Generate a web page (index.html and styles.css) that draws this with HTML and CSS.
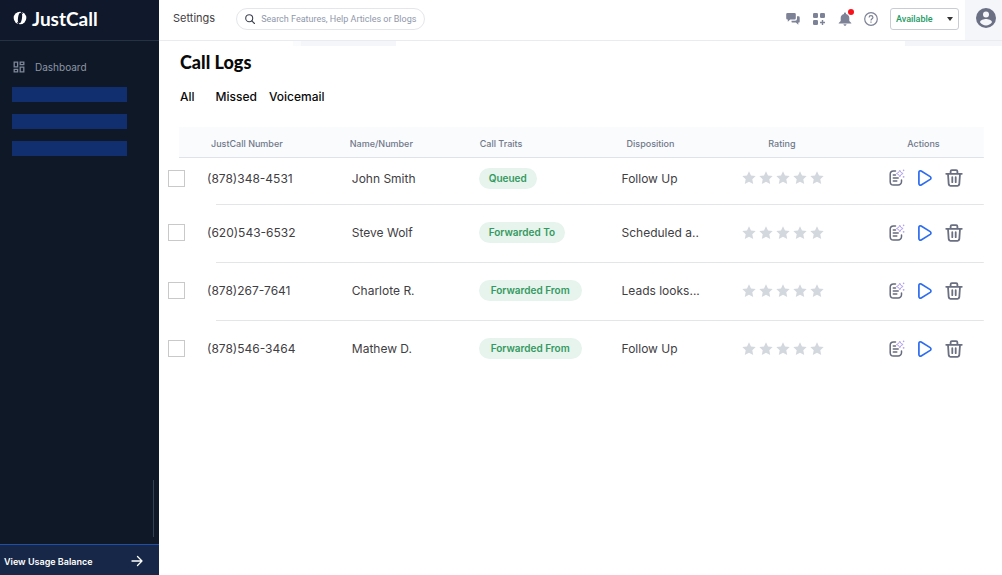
FILE: index.html
```html
<!DOCTYPE html>
<html lang="en">
<head>
    <meta charset="UTF-8">
    <meta name="viewport" content="width=device-width, initial-scale=1.0">
    <title>JustCall - Call Logs</title>
    <link rel="stylesheet" href="styles.css">
</head>
<body>
    <!-- Shared icons -->
    <svg class="sprite" aria-hidden="true">
        <symbol id="star" viewBox="0 0 14 14">
            <path d="M7 .3l2 4.200 4.700.6-3.400 3.200.9 4.700L7 10.800 2.800 13l.9-4.700L.3 5.100 5 4.500z"/>
        </symbol>
        <symbol id="stars" viewBox="0 0 82 14">
            <use href="#star" x="0" width="14" height="14"/>
            <use href="#star" x="17" width="14" height="14"/>
            <use href="#star" x="34" width="14" height="14"/>
            <use href="#star" x="51" width="14" height="14"/>
            <use href="#star" x="68" width="14" height="14"/>
        </symbol>
        <symbol id="note" viewBox="0 0 16 18">
            <g fill="none" stroke="#666b7e" stroke-width="1.500" stroke-linecap="round">
                <path d="M6.500 2h-2A3.300 3.300 0 0 0 1.200 5.300v7.400A3.300 3.300 0 0 0 4.500 16h4.700a3.300 3.300 0 0 0 3.300-3.300V11"/>
                <path d="M4.300 6h2.200M4.300 9h4.900M4.300 12h3.500"/>
            </g>
            <path d="M10.800 1.200l1.100 2.200 2.200 1.100-2.200 1.100-1.100 2.200-1.100-2.200-2.200-1.100 2.200-1.100z" fill="#fff" stroke="#b3a3ee" stroke-width="1"/>
            <circle cx="14.600" cy="1.400" r=".8" fill="#b3a3ee"/>
            <circle cx="14.600" cy="7.800" r=".9" fill="#b3a3ee"/>
        </symbol>
        <symbol id="play" viewBox="0 0 16 18">
            <path d="M1.900 3.400v11.200c0 1.300 1.200 1.900 2.300 1.300l9-5.500c1-.7 1-2.100 0-2.800l-9-5.500c-1.100-.6-2.300 0-2.300 1.300z" fill="none" stroke="#2e6cf0" stroke-width="1.700"/>
        </symbol>
        <symbol id="trash" viewBox="0 0 18 18">
            <path d="M1.200 4.800h15.600M3 4.800l.7 10.400c.1 1 .8 1.600 1.700 1.600h7.200c.9 0 1.600-.6 1.700-1.600L15 4.800M5.600 4.600V2.500c0-.8.500-1.300 1.300-1.300h4.200c.8 0 1.300.5 1.300 1.300v2.100M7.300 8.200v5M10.700 8.200v5" fill="none" stroke="#6a6f81" stroke-width="1.800" stroke-linecap="round" stroke-linejoin="round"/>
        </symbol>
    </svg>

    <div class="app">
        <!-- Sidebar -->
        <aside class="sidebar">
            <a class="logo" href="#">
                <svg width="14" height="14" viewBox="0 0 14 14">
                    <ellipse cx="7" cy="7" rx="6.300" ry="6.300" fill="#fff"/>
                    <ellipse cx="7" cy="7" rx="2" ry="5.300" transform="rotate(8 7 7)" fill="#10192b"/>
                    <path d="M8.200 0l1.100 3M5.800 14l-1.100-3" stroke="#10192b" stroke-width="1.200"/>
                </svg>
                <span>JustCall</span>
            </a>
            <nav class="menu">
                <a class="menu-item" href="#">
                    <svg width="12" height="12" viewBox="0 0 12 12" fill="none" stroke="#7d8798" stroke-width="1.300">
                        <path d="M1.200 1.200h3.400v4.600H1.200zM7.200 1.200h3.600v2.400H7.200zM7.200 6.200h3.600v4.600H7.200zM1.200 8.400h3.400v2.400H1.200z"/>
                    </svg>
                    <span>Dashboard</span>
                </a>
                <div class="menu-block"></div>
                <div class="menu-block"></div>
                <div class="menu-block"></div>
            </nav>
            <div class="scroll-thumb"></div>
            <a class="balance" href="#">
                <span>View Usage Balance</span>
                <svg width="12" height="12" viewBox="0 0 12 12" fill="none" stroke="#fff" stroke-width="1.300" stroke-linecap="round" stroke-linejoin="round">
                    <path d="M1 6h10M6.500 1.500L11 6l-4.500 4.500"/>
                </svg>
            </a>
        </aside>

        <div class="content">
            <!-- Top bar -->
            <header class="topbar">
                <a class="settings" href="#">Settings</a>
                <label class="search">
                    <svg width="10" height="10" viewBox="0 0 10 10" fill="none" stroke="#3c4250" stroke-width="1.100" stroke-linecap="round">
                        <circle cx="4.200" cy="4.200" r="3.500"/>
                        <path d="M6.800 6.800l2.700 2.700"/>
                    </svg>
                    <input type="text" placeholder="Search Features, Help Articles or Blogs" aria-label="Search">
                </label>
                <div class="tools">
                    <button class="tool" aria-label="Messages">
                        <svg width="14" height="14" viewBox="0 0 14 14" fill="#7d8296">
                            <path d="M1.500 1h7A1.300 1.300 0 0 1 9.800 2.300v4A1.300 1.300 0 0 1 8.500 7.600H4.300L1.800 9.800V7.600h-.3A1.300 1.300 0 0 1 .2 6.300v-4A1.300 1.300 0 0 1 1.500 1z"/>
                            <path d="M11 4.200h1.500a1.200 1.200 0 0 1 1.200 1.200v4a1.200 1.200 0 0 1-1.200 1.200h-.2v2.200l-2.400-2.200H6.700A1.200 1.200 0 0 1 5.500 9.400v-.6h3.700A1.800 1.800 0 0 0 11 7z"/>
                        </svg>
                    </button>
                    <button class="tool" aria-label="Apps">
                        <svg width="14" height="14" viewBox="0 0 14 14" fill="#7d8296">
                            <rect x="1" y="1" width="5" height="5" rx="1.300"/>
                            <rect x="8" y="1" width="5" height="5" rx="1.300"/>
                            <rect x="1" y="8" width="5" height="5" rx="1.300"/>
                            <path d="M9.800 8h1.400v1.800H13v1.400h-1.800V13H9.800v-1.800H8V9.800h1.800z"/>
                        </svg>
                    </button>
                    <button class="tool" aria-label="Notifications">
                        <svg width="14" height="14" viewBox="0 0 14 14" fill="#7d8296">
                            <path d="M7 .5c.6 0 1 .4 1 1v.4c2.100.5 3.300 2 3.300 4v3.200l2 1.900v.6H.7V11l2-1.900V5.900c0-2 1.200-3.500 3.300-4v-.4c0-.6.400-1 1-1zM5.500 12.200h3c0 .9-.6 1.500-1.500 1.500s-1.500-.6-1.500-1.500z"/>
                        </svg>
                        <span class="dot"></span>
                    </button>
                    <button class="tool" aria-label="Help">
                        <svg width="14" height="14" viewBox="0 0 14 14" fill="none" stroke="#7d8296" stroke-width="1.200">
                            <circle cx="7" cy="7" r="6.300"/>
                            <path d="M5.100 5.500C5.100 4.400 5.900 3.700 7 3.700s1.900.7 1.900 1.700C8.900 6.700 7 6.800 7 8.400M7 9.500v1.300"/>
                        </svg>
                    </button>
                    <select class="status" aria-label="Status">
                        <option>Available</option>
                    </select>
                </div>
                <button class="profile" aria-label="Profile">
                    <svg width="20" height="20" viewBox="0 0 20 20">
                        <circle cx="10" cy="10" r="10" fill="#6b7085"/>
                        <circle cx="10" cy="6.500" r="3" fill="#f4f6fa"/>
                        <path d="M4 14.200c0-2.100 4-3.200 6-3.200s6 1.100 6 3.200a7.200 7.200 0 0 1-12 0z" fill="#f4f6fa"/>
                    </svg>
                </button>
            </header>
            <div class="strip">
                <span class="strip-tab"></span>
                <span class="strip-end"></span>
            </div>

            <!-- Call logs -->
            <main class="page">
                <h1>Call Logs</h1>
                <nav class="tabs">
                    <a class="tab-all" href="#">All</a>
                    <a href="#">Missed</a>
                    <a href="#">Voicemail</a>
                </nav>

                <table class="logs">
                    <thead>
                        <tr>
                            <th class="col-check"></th>
                            <th class="col-number">JustCall Number</th>
                            <th class="col-name">Name/Number</th>
                            <th class="col-traits">Call Traits</th>
                            <th class="col-disposition">Disposition</th>
                            <th class="col-rating">Rating</th>
                            <th class="col-actions">Actions</th>
                        </tr>
                    </thead>
                    <tbody>
                        <tr>
                            <td><input type="checkbox" aria-label="Select John Smith"></td>
                            <td>(878)348-4531</td>
                            <td class="name">John Smith</td>
                            <td><span class="badge">Queued</span></td>
                            <td>Follow Up</td>
                            <td><svg class="stars"><use href="#stars"/></svg></td>
                            <td>
                                <div class="actions">
                                    <button aria-label="Notes"><svg width="16" height="18"><use href="#note"/></svg></button>
                                    <button aria-label="Play"><svg width="16" height="18"><use href="#play"/></svg></button>
                                    <button aria-label="Delete"><svg width="18" height="18"><use href="#trash"/></svg></button>
                                </div>
                            </td>
                        </tr>
                        <tr>
                            <td><input type="checkbox" aria-label="Select Steve Wolf"></td>
                            <td>(620)543-6532</td>
                            <td class="name">Steve Wolf</td>
                            <td><span class="badge">Forwarded To</span></td>
                            <td>Scheduled a..</td>
                            <td><svg class="stars"><use href="#stars"/></svg></td>
                            <td>
                                <div class="actions">
                                    <button aria-label="Notes"><svg width="16" height="18"><use href="#note"/></svg></button>
                                    <button aria-label="Play"><svg width="16" height="18"><use href="#play"/></svg></button>
                                    <button aria-label="Delete"><svg width="18" height="18"><use href="#trash"/></svg></button>
                                </div>
                            </td>
                        </tr>
                        <tr>
                            <td><input type="checkbox" aria-label="Select Charlote R."></td>
                            <td>(878)267-7641</td>
                            <td class="name">Charlote R.</td>
                            <td><span class="badge badge-wide">Forwarded From</span></td>
                            <td>Leads looks...</td>
                            <td><svg class="stars"><use href="#stars"/></svg></td>
                            <td>
                                <div class="actions">
                                    <button aria-label="Notes"><svg width="16" height="18"><use href="#note"/></svg></button>
                                    <button aria-label="Play"><svg width="16" height="18"><use href="#play"/></svg></button>
                                    <button aria-label="Delete"><svg width="18" height="18"><use href="#trash"/></svg></button>
                                </div>
                            </td>
                        </tr>
                        <tr>
                            <td><input type="checkbox" aria-label="Select Mathew D."></td>
                            <td>(878)546-3464</td>
                            <td class="name">Mathew D.</td>
                            <td><span class="badge badge-wide">Forwarded From</span></td>
                            <td>Follow Up</td>
                            <td><svg class="stars"><use href="#stars"/></svg></td>
                            <td>
                                <div class="actions">
                                    <button aria-label="Notes"><svg width="16" height="18"><use href="#note"/></svg></button>
                                    <button aria-label="Play"><svg width="16" height="18"><use href="#play"/></svg></button>
                                    <button aria-label="Delete"><svg width="18" height="18"><use href="#trash"/></svg></button>
                                </div>
                            </td>
                        </tr>
                    </tbody>
                </table>
            </main>
        </div>
    </div>
</body>
</html>
```
FILE: styles.css
```css
* {
    box-sizing: border-box;
}

body {
    margin: 0;
    font-family: Inter, "Liberation Sans", sans-serif;
    font-size: 12px;
    color: #3f4044;
    background: #fff;
}

a {
    color: inherit;
    text-decoration: none;
}

button {
    padding: 0;
    border: 0;
    background: none;
    cursor: pointer;
}

svg {
    display: block;
}

.sprite {
    position: absolute;
    width: 0;
    height: 0;
}

.app {
    display: flex;
    min-height: 100vh;
}

/* Sidebar */
.sidebar {
    display: flex;
    flex-direction: column;
    flex: 0 0 159px;
    background: #0f1827;
}

.logo {
    display: flex;
    align-items: center;
    gap: 5px;
    height: 41px;
    padding: 0 13px 4px;
    border-bottom: 1px solid #263143;
    background: #10192b;
    font-family: Lato, sans-serif;
    font-size: 19px;
    font-weight: bold;
    color: #fff;
}

.menu {
    display: flex;
    flex-direction: column;
    gap: 12px;
    flex: 1;
    padding: 18px 32px 0 12px;
}

.menu-item {
    display: flex;
    align-items: center;
    gap: 10px;
    height: 16px;
    padding-left: 1px;
    font-size: 10px;
    color: #8d96a5;
}

.menu-block {
    height: 15px;
    background: #112f6e;
}

.scroll-thumb {
    align-self: flex-end;
    width: 1px;
    height: 57px;
    margin: 0 5px 7px 0;
    background: #354052;
}

.balance {
    display: flex;
    align-items: center;
    justify-content: space-between;
    height: 31px;
    padding: 2px 16px 0 4px;
    border-top: 1px solid #1f4fa8;
    background: #172747;
    font-size: 9px;
    font-weight: 600;
    color: #fff;
}

/* Top bar */
.content {
    flex: 1;
    min-width: 0;
}

.topbar {
    display: flex;
    align-items: center;
    height: 41px;
    padding-left: 14px;
    border-bottom: 1px solid #e9ebee;
}

.settings {
    margin-right: 21px;
    padding-bottom: 4px;
    font-size: 11px;
}

.search {
    display: flex;
    align-items: center;
    gap: 6px;
    width: 189px;
    height: 22px;
    margin-bottom: 2px;
    padding: 0 6px 0 8px;
    border: 1px solid #e4e6ea;
    border-radius: 11px;
}

.search svg {
    flex: none;
}

.search input {
    flex: 1;
    min-width: 0;
    padding: 0;
    border: 0;
    outline: 0;
    background: none;
    font-family: Roboto, sans-serif;
    font-size: 9px;
}

.search input::placeholder {
    color: #8f97aa;
}

.tools {
    display: flex;
    align-items: center;
    gap: 12px;
    margin: 0 6px 3px auto;
}

.tool {
    position: relative;
}

.dot {
    position: absolute;
    top: -3px;
    right: -2px;
    width: 6px;
    height: 6px;
    border-radius: 50%;
    background: #f8121c;
}

.status {
    width: 69px;
    height: 22px;
    padding: 0 5px;
    border: 1px solid #c9ccd3;
    border-radius: 3px;
    appearance: none;
    background: url("data:image/svg+xml,%3Csvg xmlns='http://www.w3.org/2000/svg' width='6' height='4'%3E%3Cpath d='M0 0h6L3 4z' fill='%23333'/%3E%3C/svg%3E") no-repeat right 5px center;
    font-family: Roboto, sans-serif;
    font-size: 9px;
    font-weight: 500;
    color: #1d9a64;
}

.profile {
    display: flex;
    align-items: center;
    justify-content: center;
    width: 37px;
    height: 40px;
    padding: 0 0 4px 5px;
    background: #f4f6fa;
}

.strip {
    display: flex;
    justify-content: space-between;
    height: 5px;
    padding-left: 134px;
}

.strip-tab {
    width: 103px;
    border-left: 8px solid #fafbfc;
    background: #f4f6f9;
}

.strip-end {
    width: 97px;
    background: #f4f5f8;
}

/* Call logs */
.page {
    padding: 4px 18px 0 9px;
}

h1 {
    margin: 0 0 13px 12px;
    font-family: Lato, sans-serif;
    font-size: 18px;
    font-weight: 900;
    line-height: 24px;
    color: #0a0a0a;
}

.tabs {
    display: flex;
    gap: 12px;
    margin: 0 0 20px 12px;
    font-size: 12px;
    font-weight: 500;
    line-height: 20px;
    color: #0a0a0a;
}

.tab-all {
    margin-right: 9px;
}

.logs {
    width: 100%;
    table-layout: fixed;
    border-collapse: collapse;
}

.logs thead tr {
    height: 31px;
    background: linear-gradient(#dfe2e6, #dfe2e6) no-repeat right bottom / calc(100% - 11px) 1px, linear-gradient(#f9fbfd, #f9fbfd) no-repeat right / calc(100% - 11px) 100%;
}

.logs th {
    padding: 2px 0 0;
    font-size: 9px;
    font-weight: 500;
    text-align: left;
    color: #70788a;
}

.logs .col-check {
    width: 39px;
}

.logs .col-number {
    width: 17.5%;
    padding-left: 4px;
}

.logs .col-name {
    width: 15.8%;
}

.logs .col-traits {
    width: 17.5%;
    padding-left: 1px;
}

.logs .col-disposition {
    width: 14.8%;
    padding-left: 5px;
}

.logs .col-rating {
    width: 18%;
    padding-left: 26px;
}

.logs .col-actions {
    padding-left: 18px;
}

.logs tbody tr {
    height: 58px;
    background: linear-gradient(#e4e5e7, #e4e5e7) no-repeat right bottom / calc(100% - 48px) 1px;
}

.logs tbody tr:first-child {
    height: 47px;
}

.logs tbody tr:last-child {
    background: none;
}

.logs td {
    padding: 0 0 3px;
}

.logs tbody tr:first-child td {
    padding-bottom: 7px;
}

.logs td.name {
    padding-left: 2px;
}

.logs input {
    display: block;
    appearance: none;
    width: 17px;
    height: 17px;
    margin: 0;
    border: 1px solid #c9c9cb;
    background: #fff;
}

.badge {
    display: inline-block;
    padding: 0 10px;
    border-radius: 11px;
    background: #e6f4ed;
    font-size: 10px;
    font-weight: 600;
    line-height: 21px;
    color: #35995f;
}

.badge-wide {
    padding: 0 12px;
}

.stars {
    width: 82px;
    height: 14px;
    fill: #d3d8de;
}

.actions {
    display: flex;
    align-items: center;
    gap: 12px;
}
```
